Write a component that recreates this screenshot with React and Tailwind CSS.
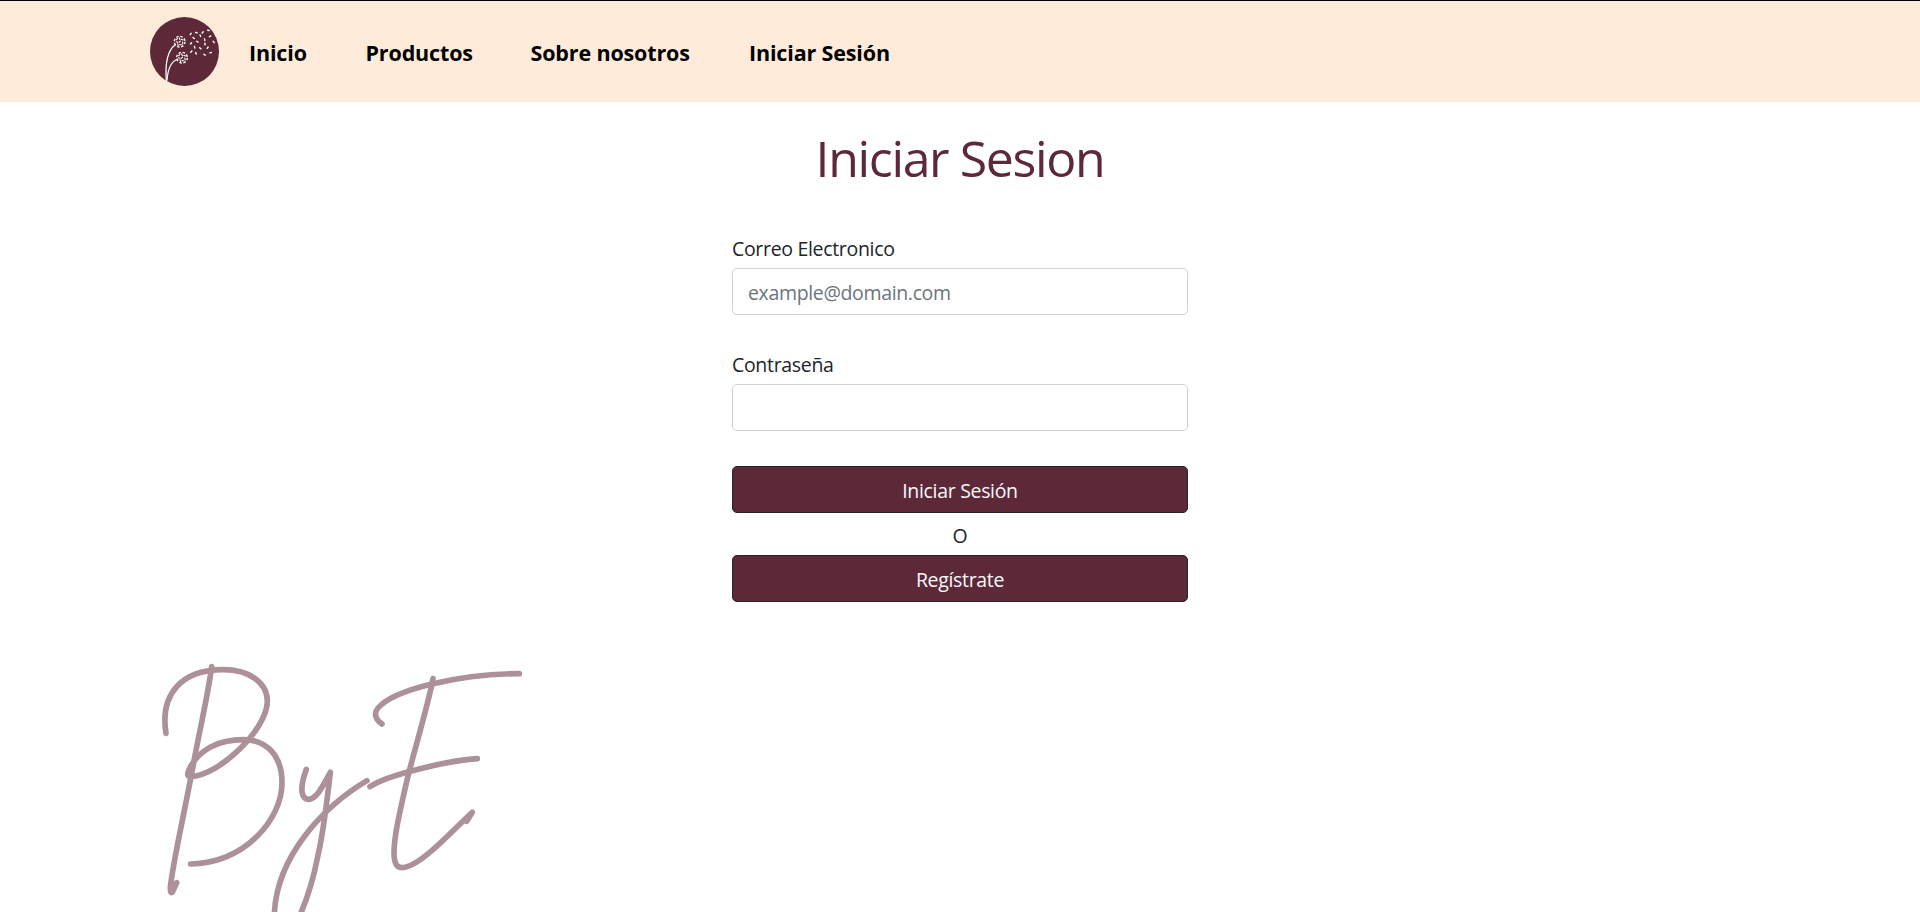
const SEEDS = [
  [152, 102, -60], [169, 98, 10], [188, 97, -50], [205, 91, 15], [161, 114, 40], [181, 107, 70],
  [153, 130, -50], [172, 125, 30], [194, 119, 80], [210, 109, -30], [221, 126, 50], [164, 142, 75],
  [181, 145, 40], [195, 132, 85], [203, 143, -55], [154, 155, -45], [168, 160, 75], [194, 164, 25],
  [212, 158, -15],
];

const HEAD_MARKS = [
  [-8, -8, -45], [0, -9, 70], [8, -6, 20], [-8, 1, 15], [0, 0, -50], [9, 4, 80],
  [-5, 9, 70], [3, 9, 5],
];

function FlowerHead({ x, y }) {
  return (
    <g transform={`translate(${x} ${y})`}>
      <circle r="16" strokeWidth="4" strokeDasharray="7.5 5.07" strokeLinecap="butt" />
      {HEAD_MARKS.map(([dx, dy, angle], i) => (
        <path key={i} d="M-2.5 0H2.5" transform={`translate(${dx} ${dy}) rotate(${angle})`} strokeWidth="3.4" />
      ))}
    </g>
  );
}

function Logo() {
  return (
    <svg viewBox="30 51 207 207" className="size-[69px] shrink-0" fill="none" stroke="#fff" strokeLinecap="round" aria-hidden="true">
      <circle cx="133.5" cy="154.5" r="103.5" fill="#5d2938" stroke="none" />
      <path d="M79 242C75 190 84 150 106 134" strokeWidth="3.8" />
      <path d="M81 240C84 203 97 182 114 177" strokeWidth="3.8" />
      <FlowerHead x={119} y={125} />
      <FlowerHead x={126} y={173} />
      {SEEDS.map(([x, y, angle], i) => (
        <path key={i} d="M-2.5 0H2.5" transform={`translate(${x} ${y}) rotate(${angle})`} strokeWidth="4.2" />
      ))}
    </svg>
  );
}

function Signature() {
  return (
    <svg viewBox="0 0 1140 786" className="block h-[262px] w-[380px]" fill="none" stroke="#ad9199" strokeWidth="17" strokeLinecap="round" strokeLinejoin="round" aria-hidden="true">
      <path d="M185 50C175 130 149 240 131 338C107 470 64 660 61 714Q61 734 68 725L80 698L64 718" />
      <path d="M48 250C29 133 94 59 220 59C300 59 352 100 352 153C352 237 210 376 121 380Q107 380 118 357C146 298 206 269 281 269C353 269 396 320 396 398C396 508 286 638 122 642" />
      <path d="M469 358C445 424 457 447 476 448C500 448 517 410 541 367C531 450 522 540 503 620Q485 715 450 795" />
      <path d="M373 795C378 620 520 470 651 392" />
      <path d="M696 222C677 210 670 190 684 174C732 118 934 71 1108 71" />
      <path d="M849 86C838 150 792 305 773 382C748 490 732 560 732 610C732 646 744 656 765 652C818 642 908 540 967 487L950 514" />
      <path d="M660 410C710 375 888 333 982 326" />
    </svg>
  );
}

function Field({ label, ...props }) {
  return (
    <label className="block h-[84px]">
      <span className="block h-[37px] leading-[35px]">{label}</span>
      <input
        {...props}
        className="block h-[47px] w-full rounded-[5px] border border-[#ced4da] bg-white px-[15px] pt-[1px] tracking-[-0.35px] outline-none placeholder:text-[#6c757d]"
      />
    </label>
  );
}

function Button({ children }) {
  return (
    <button className="block h-[47px] w-full rounded-[5px] border border-[#212529] bg-[#5d2938] pt-[3px] tracking-[-0.32px] text-[#f8f9fa]">
      {children}
    </button>
  );
}

export default function App() {
  return (
    <div className="h-screen overflow-hidden bg-white font-['Open_Sans',sans-serif] text-[19.5px] tracking-[-0.32px] text-[#212529]">
      <nav className="flex h-[102px] items-center border-t border-black bg-[#ffebda] pl-[150px]">
        <Logo />
        <ul className="flex pt-[3px] pl-[30px] text-[21.5px] font-bold tracking-[-0.15px] whitespace-nowrap text-black">
          <li className="w-[116.5px]">Inicio</li>
          <li className="w-[165px]">Productos</li>
          <li className="w-[218.5px]">Sobre nosotros</li>
          <li>Iniciar Sesión</li>
        </ul>
      </nav>
      <main>
        <h1 className="pt-[22px] text-center text-[50px] leading-[68px] tracking-[-1.35px] text-[#5d2938]">Iniciar Sesion</h1>
        <form className="mx-auto mt-[39px] w-[456px]" onSubmit={(e) => e.preventDefault()}>
          <Field label="Correo Electronico" type="email" placeholder="example@domain.com" />
          <div className="mt-8">
            <Field label="Contraseña" type="password" />
          </div>
          <div className="mt-[35px]">
            <Button>Iniciar Sesión</Button>
          </div>
          <p className="h-[42px] pt-[2px] text-center leading-[42px]">O</p>
          <Button>Regístrate</Button>
        </form>
        <div className="mt-12 ml-[150px]">
          <Signature />
        </div>
      </main>
    </div>
  );
}
